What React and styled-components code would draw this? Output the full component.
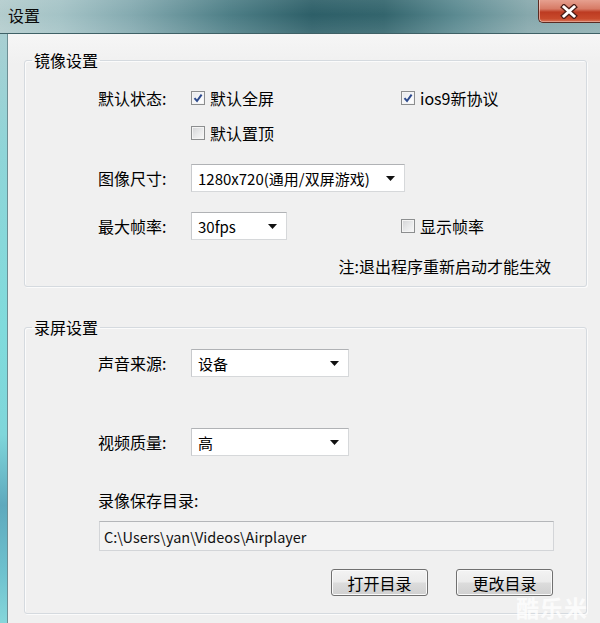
import React from "react";
import styled, { createGlobalStyle } from "styled-components";

const GlobalStyle = createGlobalStyle`
  html, body {
    margin: 0;
    padding: 0;
    background: #f0f0f0;
  }
  body {
    font-family: "Noto Sans CJK SC", "Noto Sans", sans-serif;
    color: #000;
  }
  * {
    box-sizing: border-box;
  }
`;

function Checkbox({ checked, children }) {
  return (
    <CheckLabel>
      <CheckBox $checked={checked}>
        {checked && (
          <svg width="10" height="10" viewBox="0 0 10 10">
            <path d="M1.5 5.2 L4 8 L8.6 1.6" fill="none" stroke="#2d4a8c" strokeWidth="2" />
          </svg>
        )}
      </CheckBox>
      {children}
    </CheckLabel>
  );
}

function Combo({ width, size, children }) {
  return (
    <ComboBox $w={width} $fs={size}>
      <span>{children}</span>
      <svg width="9" height="5" viewBox="0 0 9 5">
        <polygon points="0,0 9,0 4.5,5" fill="#111" />
      </svg>
    </ComboBox>
  );
}

function App() {
  return (
    <>
      <GlobalStyle />
      <Window>
        <TitleBar>
          <Title>设置</Title>
          <CloseButton>
            <svg width="18" height="15" viewBox="0 0 18 15">
              <path d="M4 3 L14 12 M14 3 L4 12" stroke="#4a1d16" strokeWidth="5.5" strokeLinecap="square" />
              <path d="M4 3 L14 12 M14 3 L4 12" stroke="#ffffff" strokeWidth="3" strokeLinecap="square" />
            </svg>
          </CloseButton>
        </TitleBar>
        <Body>
          <Frame />
          <Client>
            <Group>
              <Legend>镜像设置</Legend>
              <Row $gap={15} $h={26}>
                <Label>默认状态:</Label>
                <Checkbox checked>默认全屏</Checkbox>
                <Checkbox checked>ios9新协议</Checkbox>
              </Row>
              <Row $gap={9} $h={26}>
                <span />
                <Checkbox>默认置顶</Checkbox>
              </Row>
              <Row $gap={18} $h={28}>
                <Label>图像尺寸:</Label>
                <Combo width={214} size={15}>1280x720(通用/双屏游戏)</Combo>
              </Row>
              <Row $gap={20} $h={28}>
                <Label>最大帧率:</Label>
                <Combo width={96} size={15}>30fps</Combo>
                <Checkbox>显示帧率</Checkbox>
              </Row>
              <Note>注:退出程序重新启动才能生效</Note>
            </Group>

            <Group $top={30} $bottom={17}>
              <Legend>录屏设置</Legend>
              <Row $gap={12} $h={28}>
                <Label>声音来源:</Label>
                <Combo width={158} size={15}>设备</Combo>
              </Row>
              <Row $gap={51} $h={28}>
                <Label>视频质量:</Label>
                <Combo width={158} size={15}>高</Combo>
              </Row>
              <Row $gap={33} $h={22}>
                <Label>录像保存目录:</Label>
              </Row>
              <PathBox>C:\Users\yan\Videos\Airplayer</PathBox>
              <Buttons>
                <Button>打开目录</Button>
                <Button>更改目录</Button>
              </Buttons>
            </Group>
          </Client>
        </Body>
        <Watermark>酷乐米</Watermark>
      </Window>
    </>
  );
}

export default App;

const Window = styled.div`
  position: relative;
  width: 600px;
  height: 623px;
  overflow: hidden;
  display: flex;
  flex-direction: column;
  background: #f0f0f0;
`;

const TitleBar = styled.div`
  flex: none;
  height: 34px;
  display: flex;
  align-items: flex-start;
  justify-content: space-between;
  border-bottom: 1px solid #3f6166;
  background:
    linear-gradient(180deg, rgba(255, 255, 255, 0.08) 0%, rgba(255, 255, 255, 0) 45%, rgba(255, 255, 255, 0.1) 100%),
    linear-gradient(90deg, #b3cccd 0%, #a4c3c6 10%, #84aab0 22%, #4e7f87 38%, #2d5f68 52%, #33656d 64%, #5b8a91 76%, #86a8ac 88%, #8eafb2 100%);
`;

const Title = styled.div`
  padding-left: 8px;
  font-size: 16px;
  line-height: 30px;
  color: #0a0a0a;
`;

const CloseButton = styled.div`
  width: 62px;
  height: 23px;
  display: flex;
  align-items: center;
  justify-content: center;
  padding-right: 2px;
  border: 1px solid #5b2b22;
  border-top: none;
  border-right: none;
  border-radius: 0 0 0 5px;
  background: linear-gradient(180deg, #e6a08f 0%, #d77b66 40%, #bd3b22 55%, #c84a2c 85%, #d9775a 100%);
  box-shadow: inset 1px 0 0 rgba(255, 255, 255, 0.45), inset 0 -1px 0 rgba(255, 255, 255, 0.3);
`;

const Body = styled.div`
  flex: 1;
  display: flex;
  min-height: 0;
`;

const Frame = styled.div`
  flex: none;
  width: 8px;
  border-right: 1px solid #6d8f94;
  background: linear-gradient(180deg, #a9cfd2 0%, #8fd5d8 20%, #80dbdc 50%, #7fd6da 68%, #5ea9bd 80%, #6fc3cf 92%, #86d6da 100%);
`;

const Client = styled.div`
  flex: 1;
  padding: 16px 15px 0 16px;
  background: linear-gradient(180deg, #f6f6f6 0px, #f0f0f0 30px);
`;

const Group = styled.fieldset`
  margin: ${(p) => p.$top || 0}px 0 0 0;
  padding: 0 32px ${(p) => (p.$bottom === undefined ? 9 : p.$bottom)}px 73px;
  min-width: 0;
  border: 1px solid #d5dadf;
  border-radius: 3px;
  box-shadow: inset 1px 1px 0 #fbfbfb, 1px 1px 0 #fbfbfb;
`;

const Legend = styled.legend`
  margin-left: -66px;
  padding: 0 2px;
  font-size: 16px;
  line-height: 20px;
`;

const Row = styled.div`
  display: grid;
  grid-template-columns: 93px 210px auto;
  align-items: center;
  height: ${(p) => p.$h}px;
  margin-top: ${(p) => p.$gap}px;
`;

const Label = styled.span`
  font-size: 16px;
  line-height: 20px;
  white-space: nowrap;
`;

const CheckLabel = styled.label`
  display: flex;
  align-items: center;
  gap: 5px;
  font-size: 16px;
  line-height: 20px;
  white-space: nowrap;
`;

const CheckBox = styled.span`
  flex: none;
  width: 14px;
  height: 14px;
  display: flex;
  align-items: center;
  justify-content: center;
  border: 1px solid #8c8e8f;
  background: ${(p) =>
    p.$checked
      ? "linear-gradient(135deg, #e4e6ea 0%, #f7f8fa 60%, #ffffff 100%)"
      : "linear-gradient(135deg, #d2d3d5 0%, #e9eaeb 55%, #f8f8f8 100%)"};
  box-shadow: inset 0 0 0 1px #f4f4f4;
`;

const ComboBox = styled.div`
  width: ${(p) => p.$w}px;
  height: 28px;
  display: flex;
  align-items: center;
  justify-content: space-between;
  padding: 0 9px 0 6px;
  background: #ffffff;
  border: 1px solid #d6d8da;
  border-top-color: #b0b2b5;
  border-left-color: #c8cacd;
  font-size: ${(p) => p.$fs}px;
  white-space: nowrap;
`;

const Note = styled.div`
  display: flex;
  justify-content: flex-end;
  margin-top: 15px;
  padding-right: 3px;
  font-size: 16px;
  line-height: 22px;
`;

const PathBox = styled.div`
  width: 455px;
  height: 30px;
  margin-top: 10px;
  margin-left: 1px;
  display: flex;
  align-items: center;
  padding-left: 4px;
  background: #f3f3f3;
  border: 1px solid #d3d5d8;
  border-top-color: #b4b6b9;
  font-size: 14.5px;
  color: #111;
`;

const Buttons = styled.div`
  display: flex;
  justify-content: flex-end;
  gap: 28px;
  margin-top: 18px;
  padding-right: 1px;
`;

const Button = styled.button`
  width: 97px;
  height: 27px;
  padding: 0;
  border: 1px solid #707070;
  border-radius: 3px;
  background: linear-gradient(180deg, #f3f3f3 0%, #ebebeb 48%, #dcdcdc 52%, #d0d0d0 100%);
  box-shadow: inset 0 0 0 1px #fafafa;
  font-family: "Noto Sans CJK SC", "Noto Sans", sans-serif;
  font-size: 16px;
  line-height: 20px;
  color: #000;
`;

const Watermark = styled.div`
  position: absolute;
  right: 12px;
  bottom: 2px;
  padding: 1px 0;
  font-size: 23px;
  line-height: 26px;
  font-weight: 700;
  color: rgba(255, 255, 255, 0.78);
  letter-spacing: 1px;
  white-space: nowrap;
`;
